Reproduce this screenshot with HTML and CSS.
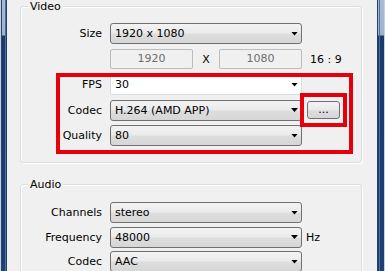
FILE: index.html
```html
<html>
  <head>
    <link rel="stylesheet" href="styles.css">
    <title>Output settings</title>
  </head>

  <body>
    <div class="window">
      <div class="frame frame-left"></div>

      <div class="client">
        <fieldset class="group video">
          <legend>Video</legend>
          <div class="form">
            <div class="label">Size</div>
            <div class="combo">1920 x 1080<i class="arrow"></i></div>
            <div></div>

            <div></div>
            <div class="dims">
              <div class="field disabled">1920</div>
              <span class="times">X</span>
              <div class="field disabled">1080</div>
            </div>
            <div class="extra ratio">16 : 9</div>

            <div class="label">FPS</div>
            <div class="combo editable">30<i class="arrow"></i></div>
            <div></div>

            <div class="label">Codec</div>
            <div class="combo">H.264 (AMD APP)<i class="arrow"></i></div>
            <div class="extra"><button class="more">...</button></div>

            <div class="label">Quality</div>
            <div class="combo">80<i class="arrow"></i></div>
            <div></div>
          </div>
        </fieldset>

        <fieldset class="group audio">
          <legend>Audio</legend>
          <div class="form">
            <div class="label">Channels</div>
            <div class="combo">stereo<i class="arrow"></i></div>
            <div></div>

            <div class="label">Frequency</div>
            <div class="combo">48000<i class="arrow"></i></div>
            <div class="extra unit">Hz</div>

            <div class="label">Codec</div>
            <div class="combo">AAC<i class="arrow"></i></div>
            <div></div>
          </div>
        </fieldset>

        <!-- red annotation boxes drawn over the dialog -->
        <div class="mark mark-settings"></div>
        <div class="mark mark-more"></div>
      </div>

      <div class="frame frame-right"></div>
    </div>
  </body>
</html>
```

FILE: styles.css
```css
body {margin:0; font-family:"DejaVu Sans", "Verdana", sans-serif; font-size:11px; color:#000; background:#f0f0f0; overflow:hidden;}
.window {display:flex; height:271px; overflow:hidden;}
.frame {flex:none;}
.frame-left {width:7px; background:linear-gradient(to right, #c3d0e1 0 1px, #27456f 1px 2px, transparent 2px 5px, #4f6f9c 5px 6px, #203e69 6px 7px), linear-gradient(#a9bbd3, #9fb3cd 35px, #1a3a6a 36px, #1d3f71);}
.frame-right {width:8px; background:linear-gradient(to right, #223f6a 0 1px, transparent 1px 2px, #4f6f9c 2px 3px, transparent 3px 7px, #c3d0e1 7px 8px), linear-gradient(#a9bbd3, #9fb3cd 35px, #1a3a6a 36px, #1d3f71);}
.client {flex:1; position:relative; padding:0 15px 0 13px;}

.group {margin:0; padding:10px 0 16px 0; border:1px solid #d5dfe5; border-radius:3px; box-shadow:inset 1px 1px 0 #fff, 1px 1px 0 #fff; min-width:0;}
.group legend {margin-left:7px; padding:0 2px; line-height:13px; background:#f0f0f0;}
.audio {margin-top:15px; padding-top:11px; height:120px;}

.form {display:grid; grid-template-columns:89px 192px 1fr; grid-auto-rows:21px; row-gap:4.5px; align-items:center;}
.audio .form {row-gap:3.5px;}
.label {text-align:right; padding-right:8px;}

.combo {box-sizing:border-box; height:21px; display:flex; align-items:center; justify-content:space-between; padding:0 3px 0 4px; border:1px solid #707070; border-radius:3px; background:linear-gradient(#f3f3f3, #ebebeb 45%, #dddddd 55%, #d6d6d6);}
.combo.editable {background:#fff; border-color:#dcdcdc; border-radius:2px;}
.arrow {width:7px; height:4px; background:#000; clip-path:polygon(0 0, 100% 0, 50% 100%);}

.dims {display:flex; align-items:center;}
.field {box-sizing:border-box; width:83px; height:20px; line-height:18px; text-align:center; border:1px solid #bcbcbc; border-radius:2px;}
.disabled {color:#6d6d6d; background:#f0f0f0;}
.times {flex:1; text-align:center;}

.extra {white-space:nowrap;}
.ratio {margin-left:8px;}
.unit {margin-left:4px;}
.more {margin-left:5px; width:33px; height:18px; padding:0; font:inherit; line-height:14px; border:1px solid #707070; border-radius:3px; background:linear-gradient(#f3f3f3, #ebebeb 45%, #dddddd 55%, #d6d6d6); display:block;}

.mark {position:absolute; border:4px solid #e5000b; box-sizing:border-box;}
.mark-settings {left:49px; top:73px; width:297px; height:81px;}
.mark-more {left:293px; top:93px; width:47px; height:34px;}
```
